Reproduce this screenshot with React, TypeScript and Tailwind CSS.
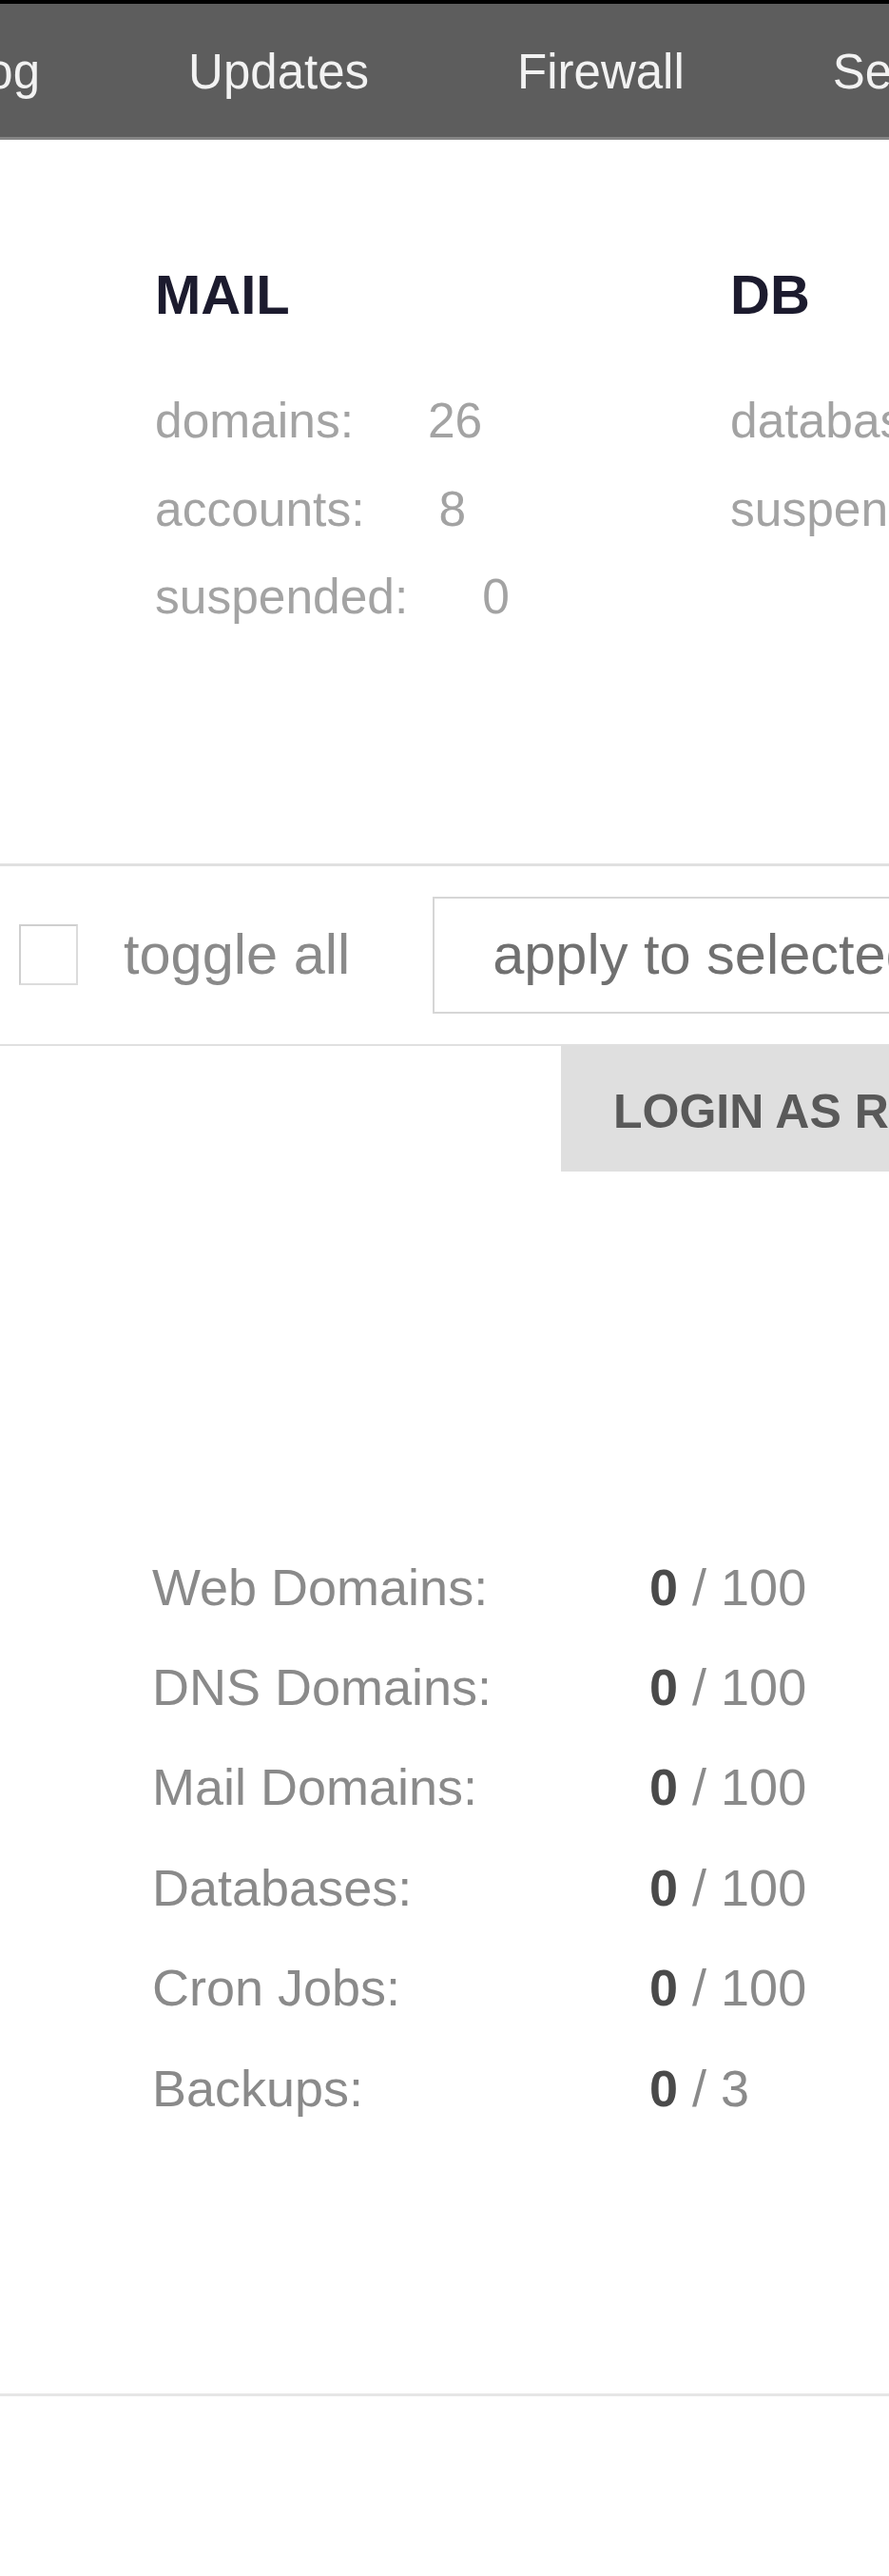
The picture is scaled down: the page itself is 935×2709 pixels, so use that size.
import React from "react";

const font = { fontFamily: '"Liberation Sans", Arial, Helvetica, sans-serif' };

function StatRow({ label, value }: { label: string; value: string }) {
  return (
    <div className="whitespace-nowrap">
      <span>{label}</span>
      <span className="ml-[78px]">{value}</span>
    </div>
  );
}

function LimitRow({ label, used, total }: { label: string; used: string; total: string }) {
  return (
    <div className="flex whitespace-nowrap">
      <div className="w-[523px] text-[#8a8a8a]">{label}</div>
      <div className="text-[#8a8a8a]">
        <span className="font-bold text-[#4a4a4a]">{used}</span> / {total}
      </div>
    </div>
  );
}

export default function App() {
  return (
    <div className="w-[935px] min-h-[2709px] overflow-hidden bg-white" style={font}>
      {/* Top menu */}
      <div className="h-[147px] border-t-4 border-black bg-[#5d5d5d] border-b-[3px] border-b-[#858585] overflow-hidden">
        <div className="flex gap-[156px] ml-[-43px] pt-[46px] text-[51px] leading-none text-[#f2f2f2] whitespace-nowrap">
          <span>Log</span>
          <span>Updates</span>
          <span>Firewall</span>
          <span>Server</span>
        </div>
      </div>

      {/* Summary stats */}
      <div className="flex pl-[163px] mt-[134px]">
        <div className="w-[605px] shrink-0">
          <div className="text-[58px] leading-none font-bold text-[#1c1b2e]">MAIL</div>
          <div className="mt-[57px] text-[51.5px] leading-[92.5px] text-[#a3a3a3]">
            <StatRow label="domains:" value="26" />
            <StatRow label="accounts:" value="8" />
            <StatRow label="suspended:" value="0" />
          </div>
        </div>
        <div className="shrink-0">
          <div className="text-[58px] leading-none font-bold text-[#1c1b2e]">DB</div>
          <div className="mt-[57px] text-[51.5px] leading-[92.5px] text-[#a3a3a3]">
            <StatRow label="databases:" value="0" />
            <StatRow label="suspended:" value="0" />
          </div>
        </div>
      </div>

      {/* Toolbar */}
      <div className="mt-[234px] border-t-[3px] border-[#e0e0e0]" />
      <div className="flex items-center h-[187px] whitespace-nowrap">
        <div className="ml-[20px] w-[62px] h-[64px] shrink-0 border-2 border-[#dcdcdc] border-t-[#cfcfcf] border-l-[#cfcfcf] bg-white" />
        <div className="ml-[48px] text-[59.5px] leading-none text-[#8a8a8a] shrink-0">toggle all</div>
        <div className="ml-[87px] h-[123px] w-[700px] shrink-0 border-2 border-[#d6d6d6] pl-[61px] flex items-center text-[59.5px] leading-none text-[#707070]">
          apply to selected
        </div>
      </div>
      <div className="border-t-2 border-[#e0e0e0]" />

      {/* User action button */}
      <div className="flex">
        <div className="ml-[590px] h-[132px] w-[600px] shrink-0 bg-[#dfdfdf] pl-[55px] pt-[44px] text-[50px] leading-none font-bold text-[#595959] whitespace-nowrap">
          LOGIN AS ROOT
        </div>
      </div>

      {/* Limits */}
      <div className="mt-[385px] pl-[160px] text-[54px] leading-[105.4px]">
        <LimitRow label="Web Domains:" used="0" total="100" />
        <LimitRow label="DNS Domains:" used="0" total="100" />
        <LimitRow label="Mail Domains:" used="0" total="100" />
        <LimitRow label="Databases:" used="0" total="100" />
        <LimitRow label="Cron Jobs:" used="0" total="100" />
        <LimitRow label="Backups:" used="0" total="3" />
      </div>

      <div className="mt-[268px] border-t-[3px] border-[#e6e6e6]" />
    </div>
  );
}
